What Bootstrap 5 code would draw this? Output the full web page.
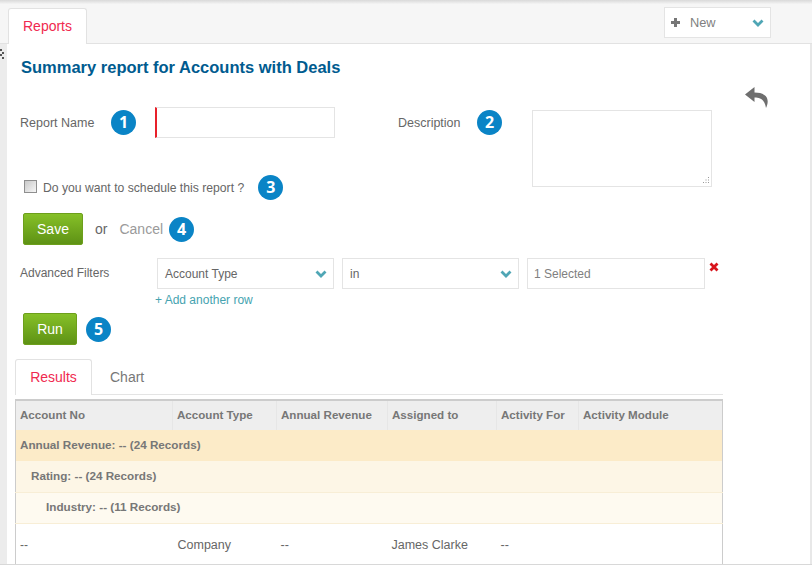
<!DOCTYPE html>
<html lang="en">
<head>
<meta charset="utf-8">
<title>Reports</title>
<link rel="stylesheet" href="https://cdn.jsdelivr.net/npm/bootstrap@5.3.0/dist/css/bootstrap.min.css">
<style>
html,body{height:565px;overflow:hidden;}
body{background:#fff;font-family:"Liberation Sans",Arial,sans-serif;font-size:12px;color:#666;position:relative;}
.shell{height:565px;display:flex;flex-direction:column;border-bottom:1px solid #d8d8d8;}
.topshade{height:4px;flex:none;background:linear-gradient(#d9d9d9,#f4f4f4);}
.topbar{height:40px;flex:none;background:#f6f6f6;border-bottom:1px solid #e2e2e2;display:flex;justify-content:space-between;padding-left:8px;}
.tabmain{margin-top:4px;height:36px;width:79px;background:#fff;border:1px solid #e2e2e2;border-bottom:0;border-radius:3px 3px 0 0;color:#f0294f;font-size:14px;display:flex;align-items:center;justify-content:center;}
.newbox{margin-top:3px;margin-right:41px;width:107px;height:31px;background:#fff;border:1px solid #e4e4e4;display:flex;align-items:center;padding:0 6px 0 6px;color:#808080;font-size:12.8px;}
.newbox .lbl{margin-left:10px;flex:1;padding-top:1px;}
.workarea{display:flex;flex:1;min-height:0;border-left:7px solid #ececec;border-right:2px solid #e8e8e8;position:relative;}
.gripdots{position:absolute;left:-7px;top:5px;}
.mainpane{width:716px;flex:none;padding-left:8px;}
.sidepane{padding:43px 0 0 22px;}
.ttl{margin:14px 0 0 6px;font-size:16.5px;line-height:18px;font-weight:700;color:#005b8f;}
.formblock{display:flex;margin-top:31px;}
.leftstack{width:517px;flex:none;padding-left:5px;}
.fldrow{height:31px;display:flex;align-items:center;}
.flabel{font-size:12.5px;color:#666;padding-top:1px;}
.numdot{width:25px;height:25px;border-radius:50%;background:#0a84c6;color:#fff;font:700 16px/25px "Open Sans","Liberation Sans",sans-serif;text-align:center;flex:none;}
.nameinput{width:180px;height:31px;border:1px solid #e4e4e4;border-left:2px solid #e8202a;margin-left:19px;background:#fff;}
.schedrow{margin-top:37px;padding-left:4px;height:25px;display:flex;align-items:center;}
.chk{width:13px;height:13px;border:1px solid #8f8f8f;background:linear-gradient(135deg,#c9c9c9,#f6f6f6);margin-right:6px;margin-bottom:3px;flex:none;}
.schedlabel{font-size:12.2px;color:#666;padding-top:1px;margin-right:14px;}
.descwrap{position:relative;width:180px;height:77px;margin-top:3px;}
.desc{width:180px;height:77px;border:1px solid #e4e4e4;resize:none;background:#fff;display:block;}
.resizer{position:absolute;right:3px;bottom:3px;}
.greenbtn{background:linear-gradient(#86c028,#5e9215);border:1px solid #6d9f1c;border-radius:2px;color:#fff;font-size:14px;height:32px;display:inline-flex;align-items:center;justify-content:center;padding:0;}
.actrow{display:flex;align-items:center;margin:13px 0 0 8px;height:32px;}
.orword{font-size:14px;margin:0 12px;color:#666;}
.cancelword{font-size:14px;color:#9a9a9a;margin-right:6px;}
.filterrow{display:flex;margin:13px 0 0 5px;}
.flabel2{width:137px;flex:none;padding-top:6px;font-size:12px;color:#666;}
.selbox{height:31px;border:1px solid #e4e4e4;display:flex;align-items:center;justify-content:space-between;padding:0 6px 0 7px;font-size:12px;color:#666;margin-right:8px;width:177px;background:#fff;}
.selbox span,.selbox.third{padding-top:1px;}
.selbox.third{width:178px;margin-right:4px;color:#808080;justify-content:flex-start;padding-left:6px;}
.addlink{display:block;margin:4px 0 0 140px;color:#46a3b0;font-size:12px;line-height:14px;text-decoration:none;}
.runrow{display:flex;align-items:center;margin:6px 0 0 8px;height:32px;}
.runrow .numdot{margin-left:9px;}
.tabstrip{display:flex;margin-top:14px;height:36px;border-bottom:1px solid #e4e4e4;}
.tabon{width:77px;height:36px;background:#fff;border:1px solid #e2e2e2;border-bottom:0;border-radius:3px 3px 0 0;color:#f0294f;font-size:14px;display:flex;align-items:center;justify-content:center;}
.taboff{margin-left:18px;font-size:14px;color:#777;line-height:37px;}
.rtable{margin-top:4px;width:708px;border-left:1px solid #ccc;border-right:1px solid #ccc;border-top:2px solid #ccc;table-layout:fixed;border-collapse:collapse;}
.rtable th{height:30px;background:#eee;font-size:11.6px;font-weight:700;color:#777;padding:0 4px 1px;border-left:1px solid #e6e6e6;}
.rtable th:first-child{border-left:0;}
.rtable td{font-size:12.5px;color:#666;padding:0 4px;}
.rtable .grp td{font-size:11.7px;font-weight:700;color:#777;height:31px;padding-bottom:1px;}
.g1 td{background:#fcebc8;}
.rtable .g2 td{background:#fdf6e6;padding-left:15px;border-bottom:1px solid #f8eed6;}
.rtable .g3 td{background:#fefaf0;padding-left:30px;border-bottom:1px solid #f8eed6;}
.rtable .datarow td{height:41px;padding-top:3px;}
.rtable .datarow td:first-child{font-size:12px;}
.rtable .datarow td:nth-child(2){padding-left:5px;}
</style>
</head>
<body>
<div class="shell">
  <div class="topshade"></div>
  <div class="topbar">
    <div class="tabmain">Reports</div>
    <div class="newbox">
      <svg width="9" height="9" viewBox="0 0 9 9"><path d="M3 0h3v3h3v3H6v3H3V6H0V3h3z" fill="#777"/></svg>
      <span class="lbl">New</span>
      <svg width="12" height="8" viewBox="0 0 12 8"><path d="M1.500 1.500 6 6l4.500-4.500" fill="none" stroke="#4fa6b5" stroke-width="2.800"/></svg>
    </div>
  </div>
  <div class="workarea">
    <svg class="gripdots" width="4" height="11" viewBox="0 0 4 11"><path d="M0 0h2v2H0zM2 3h2v2H2zM0 5h2v2H0zM2 8h2v2H2z" fill="#555"/></svg>
    <div class="mainpane">
      <div class="ttl">Summary report for Accounts with Deals</div>
      <div class="formblock">
        <div class="leftstack">
          <div class="fldrow">
            <span class="flabel" style="width:91px">Report Name</span>
            <span class="numdot">1</span>
            <input class="nameinput" type="text" aria-label="Report Name">
            <span class="flabel ms-auto" style="width:79px">Description</span>
            <span class="numdot" style="margin-right:30px">2</span>
          </div>
          <div class="schedrow">
            <span class="chk"></span>
            <span class="schedlabel">Do you want to schedule this report ?</span>
            <span class="numdot">3</span>
          </div>
        </div>
        <div class="descwrap">
          <textarea class="desc" aria-label="Description"></textarea>
          <svg class="resizer" width="8" height="7" viewBox="0 0 8 7"><path d="M7 0h1v1H7zM4.500 2.500h1v1h-1zM7 2.500h1v1H7zM2 5h1v1H2zM4.500 5h1v1h-1zM7 5h1v1H7z" fill="#999"/></svg>
        </div>
      </div>
      <div class="actrow">
        <button class="greenbtn" style="width:60px" type="button">Save</button>
        <span class="orword">or</span>
        <span class="cancelword">Cancel</span>
        <span class="numdot">4</span>
      </div>
      <div class="filterrow">
        <span class="flabel2">Advanced Filters</span>
        <div class="selbox"><span>Account Type</span><svg width="12" height="8" viewBox="0 0 12 8"><path d="M1.500 1.500 6 6l4.500-4.500" fill="none" stroke="#4fa6b5" stroke-width="2.800"/></svg></div>
        <div class="selbox"><span>in</span><svg width="12" height="8" viewBox="0 0 12 8"><path d="M1.500 1.500 6 6l4.500-4.500" fill="none" stroke="#4fa6b5" stroke-width="2.800"/></svg></div>
        <div class="selbox third">1 Selected</div>
        <svg class="mt-1" width="10" height="10" viewBox="0 0 10 10"><path d="M1.500 1.500l7 7M8.500 1.500l-7 7" stroke="#d8141c" stroke-width="2.800" fill="none"/></svg>
      </div>
      <a class="addlink" href="#">+ Add another row</a>
      <div class="runrow">
        <button class="greenbtn" style="width:54px" type="button">Run</button>
        <span class="numdot">5</span>
      </div>
      <div class="tabstrip">
        <div class="tabon">Results</div>
        <div class="taboff">Chart</div>
      </div>
      <table class="rtable">
        <colgroup><col style="width:157px"><col style="width:104px"><col style="width:111px"><col style="width:109px"><col style="width:82px"><col></colgroup>
        <thead><tr><th>Account No</th><th>Account Type</th><th>Annual Revenue</th><th>Assigned to</th><th>Activity For</th><th>Activity Module</th></tr></thead>
        <tbody>
          <tr class="grp g1"><td colspan="6">Annual Revenue: -- (24 Records)</td></tr>
          <tr class="grp g2"><td colspan="6">Rating: -- (24 Records)</td></tr>
          <tr class="grp g3"><td colspan="6">Industry: -- (11 Records)</td></tr>
          <tr class="datarow"><td>--</td><td>Company</td><td>--</td><td>James Clarke</td><td>--</td><td></td></tr>
        </tbody>
      </table>
    </div>
    <div class="sidepane">
      <svg width="24" height="21" viewBox="0 0 24 21"><path d="M9.500 0 0 7.500 9.500 15v-4.500c6 0 10 2 11.500 10.500 3-6 3.500-15.500-11.500-15.500z" fill="#6e6e6e"/></svg>
    </div>
  </div>
</div>
<script src="https://cdn.jsdelivr.net/npm/bootstrap@5.3.0/dist/js/bootstrap.bundle.min.js"></script>
</body>
</html>
